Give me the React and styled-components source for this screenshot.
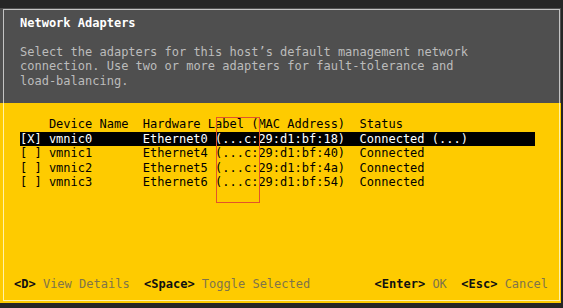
import styled, { createGlobalStyle } from "styled-components";

const GlobalStyle = createGlobalStyle`
  html, body {
    margin: 0;
    padding: 0;
    background: #262626;
  }
  body {
    width: 563px;
    height: 308px;
    overflow: hidden;
    font-family: "DejaVu Sans Mono", "Liberation Mono", monospace;
    font-size: 12px;
  }
`;

const adapters = [
  { name: "vmnic0", label: "Ethernet0", mac: "18", status: "Connected (...)", checked: true },
  { name: "vmnic1", label: "Ethernet4", mac: "40", status: "Connected" },
  { name: "vmnic2", label: "Ethernet5", mac: "4a", status: "Connected" },
  { name: "vmnic3", label: "Ethernet6", mac: "54", status: "Connected" },
];

function App() {
  return (
    <>
      <GlobalStyle />
      <Screen>
        <Header>
          <Title>Network Adapters</Title>
          <Description>
            Select the adapters for this host’s default management network
            <br />
            connection. Use two or more adapters for fault-tolerance and
            <br />
            load-balancing.
          </Description>
        </Header>
        <Body>
          <Table>
            <Row>
              <Cell />
              <Cell>Device Name</Cell>
              <Cell>Hardware Label (MAC Address)</Cell>
              <Cell>Status</Cell>
            </Row>
            {adapters.map((a) => (
              <Row key={a.name} $selected={a.checked}>
                <Cell>{a.checked ? "[X]" : "[ ]"}</Cell>
                <Cell>{a.name}</Cell>
                <Cell>{`${a.label} (...c:29:d1:bf:${a.mac})`}</Cell>
                <Cell>{a.status}</Cell>
              </Row>
            ))}
          </Table>
          <Footer>
            <KeyGroup>
              <Hint><Key>&lt;D&gt;</Key> View Details</Hint>
              <Hint><Key>&lt;Space&gt;</Key> Toggle Selected</Hint>
            </KeyGroup>
            <KeyGroup>
              <Hint><Key>&lt;Enter&gt;</Key> OK</Hint>
              <Hint><Key>&lt;Esc&gt;</Key> Cancel</Hint>
            </KeyGroup>
          </Footer>
        </Body>
        <Marker />
      </Screen>
    </>
  );
}

export default App;

const Screen = styled.div`
  position: relative;
  margin-top: 8px;
  width: 561px;
  height: 295px;
  box-sizing: border-box;
  padding: 1px 1px 2px 3px;
  display: flex;
  flex-direction: column;
  background: linear-gradient(#4f4f4f 0 95px, #fecb00 95px);
`;

const Header = styled.div`
  height: 94px;
  box-sizing: border-box;
  border: 1px solid #c4c4c4;
  border-bottom: none;
  padding: 6px 0 0 16px;
  line-height: 14.5px;
`;

const Title = styled.div`
  color: #ffffff;
  font-weight: bold;
`;

const Description = styled.div`
  margin-top: 14px;
  color: #bcbcbc;
`;

const Body = styled.div`
  flex: 1;
  box-sizing: border-box;
  border: 1px solid #fff2a8;
  border-top: none;
  padding: 14px 11px 2px 10px;
  display: flex;
  flex-direction: column;
  line-height: 14.5px;
  color: #000;
`;

const Table = styled.div`
  margin-left: 6px;
  width: 515px;
`;

const Row = styled.div`
  display: grid;
  grid-template-columns: 4ch 13ch 30ch auto;
  white-space: pre;
  height: 14.5px;
  background: ${(p) => (p.$selected ? "#000" : "transparent")};
  color: ${(p) => (p.$selected ? "#fff" : "#000")};
`;

const Cell = styled.span``;

const Footer = styled.div`
  margin-top: auto;
  margin-bottom: 7px;
  display: flex;
  justify-content: space-between;
  white-space: pre;
  color: #80744a;
`;

const KeyGroup = styled.div`
  display: flex;
  gap: 2ch;
`;

const Hint = styled.span``;

const Key = styled.span`
  color: #111;
  font-weight: bold;
`;

const Marker = styled.div`
  position: absolute;
  left: 216px;
  top: 109px;
  width: 44px;
  height: 86px;
  box-sizing: border-box;
  border: 1px solid #e2542a;
`;
